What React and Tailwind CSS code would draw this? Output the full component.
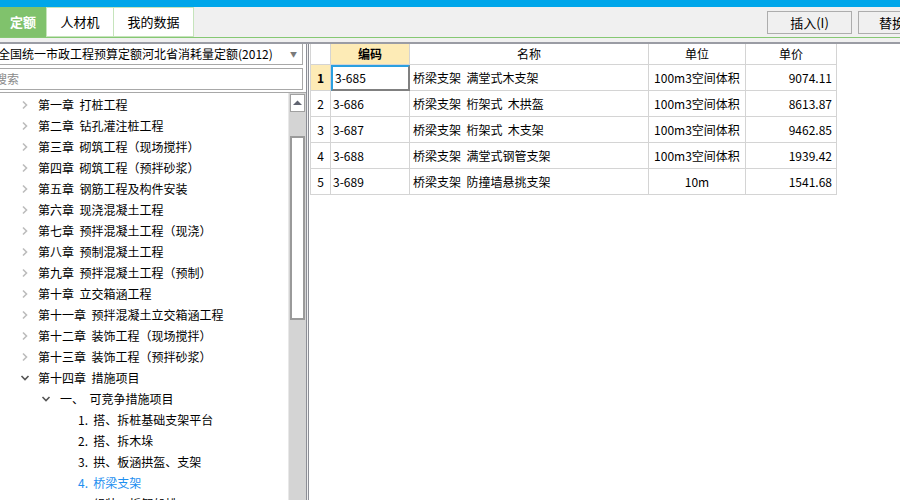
import React from 'react';

const chapters = [
  '第一章  打桩工程',
  '第二章  钻孔灌注桩工程',
  '第三章  砌筑工程（现场搅拌）',
  '第四章  砌筑工程（预拌砂浆）',
  '第五章  钢筋工程及构件安装',
  '第六章  现浇混凝土工程',
  '第七章  预拌混凝土工程（现浇）',
  '第八章  预制混凝土工程',
  '第九章  预拌混凝土工程（预制）',
  '第十章  立交箱涵工程',
  '第十一章  预拌混凝土立交箱涵工程',
  '第十二章  装饰工程（现场搅拌）',
  '第十三章  装饰工程（预拌砂浆）',
];

const items = [
  '1.  搭、拆桩基础支架平台',
  '2.  搭、拆木垛',
  '3.  拱、板涵拱盔、支架',
  '4.  桥梁支架',
  '5.  组装、拆卸船排',
];

const rows = [
  { n: 1, code: '3-685', name: '桥梁支架  满堂式木支架', unit: '100m3空间体积', price: '9074.11' },
  { n: 2, code: '3-686', name: '桥梁支架  桁架式  木拱盔', unit: '100m3空间体积', price: '8613.87' },
  { n: 3, code: '3-687', name: '桥梁支架  桁架式  木支架', unit: '100m3空间体积', price: '9462.85' },
  { n: 4, code: '3-688', name: '桥梁支架  满堂式钢管支架', unit: '100m3空间体积', price: '1939.42' },
  { n: 5, code: '3-689', name: '桥梁支架  防撞墙悬挑支架', unit: '10m', price: '1541.68' },
];

const Chevron = ({ open, dark }) => (
  <svg width="10" height="10" viewBox="0 0 10 10" className="shrink-0">
    {open ? (
      <polyline points="1.5,3 5,6.5 8.5,3" fill="none" stroke={dark ? '#555' : '#aaa'} strokeWidth="1.6" />
    ) : (
      <polyline points="3,1.5 6.5,5 3,8.5" fill="none" stroke={dark ? '#555' : '#bcbcbc'} strokeWidth="1.6" />
    )}
  </svg>
);

const App = () => {
  return (
    <div className="w-[900px] h-[500px] overflow-hidden bg-white flex flex-col text-[12px] text-black" style={{ fontFamily: '"Noto Sans CJK SC", "Liberation Sans", sans-serif' }}>
      <div className="h-[7px] bg-[#00a6ea] shrink-0" />

      {/* tabs + buttons */}
      <div className="h-[30px] bg-[#f0f0f0] flex items-stretch shrink-0 overflow-hidden">
        <div className="w-[46px] bg-[#80c26c] text-white font-bold text-[13px] flex items-center justify-center shrink-0">定额</div>
        <div className="w-[68px] bg-white border border-[#c6e4bc] text-[13px] flex items-center justify-center shrink-0">人材机</div>
        <div className="w-[80px] bg-white border border-[#c6e4bc] border-l-0 text-[13px] flex items-center justify-center shrink-0">我的数据</div>
        <div className="ml-[573px] mt-[4px] mb-[3px] w-[85px] border border-[#adadad] bg-[#f0f0f0] flex items-center justify-center shrink-0 text-[13px]">插入(I)</div>
        <div className="ml-[6px] mt-[4px] mb-[3px] w-[85px] border border-[#adadad] bg-[#f0f0f0] flex items-center justify-start pl-[20px] shrink-0 text-[13px]">替换</div>
      </div>
      <div className="h-px bg-[#86c873] shrink-0" />
      <div className="h-[4px] bg-[#f0f0f0] shrink-0" />
      <div className="h-[2px] bg-[#9a9ca4] shrink-0" />

      <div className="flex flex-1 min-h-0">
        {/* left panel */}
        <div className="w-[306px] flex flex-col shrink-0 min-h-0">
          <div className="h-[21px] mr-[3px] border-b border-r border-[#a8a8a8] flex items-center justify-between overflow-hidden">
            <span className="-ml-[2px] whitespace-nowrap">全国统一市政工程预算定额河北省消耗量定额(2012)</span>
            <span className="text-[#7a7a7a] text-[7px] pr-[5px]">▼</span>
          </div>
          <div className="h-[22px] mt-[3px] mr-[3px] border-t border-b border-r border-[#a8a8a8] flex items-center overflow-hidden">
            <span className="-ml-[5px] text-[#8a8a8a]">搜索</span>
          </div>
          <div className="mt-[2px] border-t border-[#a8a8a8] flex flex-1 min-h-0">
            <div className="flex-1 pt-[1px] overflow-hidden">
              {chapters.map((c) => (
                <div key={c} className="h-[21px] flex items-center pl-[20px] gap-[8px] whitespace-pre">
                  <Chevron />
                  <span>{c}</span>
                </div>
              ))}
              <div className="h-[21px] flex items-center pl-[20px] gap-[8px] whitespace-pre">
                <Chevron open dark />
                <span>第十四章  措施项目</span>
              </div>
              <div className="h-[21px] flex items-center pl-[41px] gap-[9px] whitespace-pre">
                <Chevron open dark />
                <span>一、  可竞争措施项目</span>
              </div>
              {items.map((t, i) => (
                <div key={t} className={`h-[21px] flex items-center pl-[78px] whitespace-pre ${i === 3 ? 'text-[#1e8ff0]' : ''}`}>
                  {t}
                </div>
              ))}
            </div>
            {/* scrollbar */}
            <div className="w-[18px] bg-[#d4d4d4] flex flex-col border-l border-[#e8e8e8] shrink-0">
              <div className="h-[18px] mt-[1px] mx-[1px] bg-white border border-[#a0a0a0] flex items-center justify-center">
                <svg width="9" height="6" viewBox="0 0 9 6"><polygon points="0,5 4.5,0.5 9,5" fill="#606470" /></svg>
              </div>
              <div className="h-[24px]" />
              <div className="h-[184px] mx-[1px] bg-white border-2 border-[#9a9a9a]" />
            </div>
          </div>
        </div>

        {/* splitter */}
        <div className="w-[4px] flex shrink-0">
          <div className="w-[1px] bg-[#8c8e96]" />
          <div className="w-[1px] bg-[#f0f0f0]" />
          <div className="w-[1px] bg-[#8c8e96]" />
          <div className="w-[1px] bg-white" />
        </div>

        {/* grid */}
        <div className="flex-1">
          <div className="w-[527px] border-l border-[#d4d4d4]">
            <div className="flex h-[21px] border-b border-[#d4d4d4]">
              <div className="w-[20px] border-r border-[#d4d4d4]" />
              <div className="w-[79px] border-r border-[#d4d4d4] bg-[#fdebb6] font-bold flex items-center justify-center">编码</div>
              <div className="w-[239px] border-r border-[#d4d4d4] flex items-center justify-center">名称</div>
              <div className="w-[97px] border-r border-[#d4d4d4] flex items-center justify-center">单位</div>
              <div className="w-[91px] border-r border-[#d4d4d4] flex items-center justify-center">单价</div>
            </div>
            {rows.map((r) => (
              <div key={r.n} className="flex h-[26px] border-b border-[#d4d4d4]">
                <div className={`w-[20px] border-r border-[#d4d4d4] flex items-center justify-center ${r.n === 1 ? 'bg-[#fdebb6] font-bold' : ''}`}>{r.n}</div>
                <div className={`w-[79px] border-r flex items-center pl-[2px] ${r.n === 1 ? 'border-t-2 border-l-2 border-t-[#2aa0e0] border-l-[#2aa0e0] border-r-2 border-r-[#808080] border-b-2 border-b-[#808080] -mb-px' : 'border-[#d4d4d4]'}`}>{r.code}</div>
                <div className="w-[239px] border-r border-[#d4d4d4] flex items-center pl-[3px] whitespace-pre">{r.name}</div>
                <div className="w-[97px] border-r border-[#d4d4d4] flex items-center justify-center">{r.unit}</div>
                <div className="w-[91px] border-r border-[#d4d4d4] flex items-center justify-end pr-[4px]">{r.price}</div>
              </div>
            ))}
          </div>
        </div>
      </div>
    </div>
  );
};

export default App;
